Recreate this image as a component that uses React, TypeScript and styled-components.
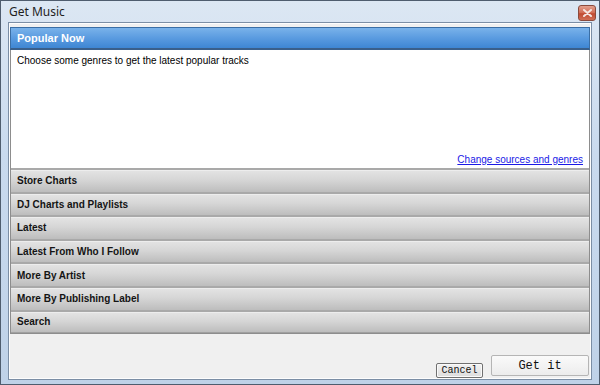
import React from 'react';
import styled, { createGlobalStyle } from 'styled-components';

const sections = [
  'Store Charts',
  'DJ Charts and Playlists',
  'Latest',
  'Latest From Who I Follow',
  'More By Artist',
  'More By Publishing Label',
  'Search',
];

const App = () => (
  <>
    <GlobalStyle />
    <Window>
      <TitleBar>
        <Title>Get Music</Title>
        <CloseButton>
          <svg width="9" height="8" viewBox="0 0 9 8">
            <path d="M1 1 L8 7 M8 1 L1 7" stroke="#f6e6e2" strokeWidth="2" strokeLinecap="round" />
          </svg>
        </CloseButton>
      </TitleBar>
      <Client>
        <Panel>
          <ActiveHeader>Popular Now</ActiveHeader>
          <Body>
            <Intro>Choose some genres to get the latest popular tracks</Intro>
            <LinkRow>
              <Link href="#">Change sources and genres</Link>
            </LinkRow>
          </Body>
          {sections.map((s) => (
            <SectionBar key={s}>{s}</SectionBar>
          ))}
        </Panel>
        <Footer>
          <SmallButton>Cancel</SmallButton>
          <BigButton>Get it</BigButton>
        </Footer>
      </Client>
    </Window>
  </>
);

export default App;

const GlobalStyle = createGlobalStyle`
  body {
    margin: 0;
    background: #ffffff;
  }
`;

const Window = styled.div`
  width: 600px;
  height: 385px;
  box-sizing: border-box;
  display: flex;
  flex-direction: column;
  background: linear-gradient(to bottom, #dce7f3 0%, #c9daee 40%, #bfd2e8 100%);
  border: 1px solid #4f5d6e;
  padding: 0 7px 4px 7px;
  font-family: "Liberation Sans", Arial, sans-serif;
`;

const TitleBar = styled.div`
  height: 21px;
  display: flex;
  align-items: center;
  justify-content: space-between;
`;

const Title = styled.span`
  font-family: "Noto Sans", "Liberation Sans", sans-serif;
  font-size: 12px;
  color: #1e1e1e;
  padding-left: 1px;
`;

const CloseButton = styled.div`
  width: 16px;
  height: 14px;
  margin-top: 3px;
  margin-right: -4px;
  border: 1px solid #8a4a3c;
  border-radius: 3px;
  background: linear-gradient(to bottom, #e3a08e 0%, #d06a52 50%, #c04a31 55%, #d06f56 100%);
  display: flex;
  align-items: center;
  justify-content: center;
`;

const Client = styled.div`
  flex: 1;
  display: flex;
  flex-direction: column;
  background: #f0f0f0;
  border: 1px solid #7b8ea5;
  box-shadow: inset 0 0 0 1px #fdfdfd;
  padding: 4px 1px 0 1px;
`;

const Panel = styled.div`
  display: flex;
  flex-direction: column;
  border: 1px solid #8d8d8d;
  border-top: none;
`;

const ActiveHeader = styled.div`
  height: 23px;
  box-sizing: border-box;
  padding-left: 6px;
  display: flex;
  align-items: center;
  color: #ffffff;
  font-weight: bold;
  font-size: 11px;
  background: linear-gradient(to bottom, #79b2ea 0%, #5a9be0 50%, #3e86d3 100%);
  border: 1px solid #3a6ea5;
  border-bottom: 2px solid #3a5f8a;
  margin: 0 -1px;
`;

const Body = styled.div`
  height: 118px;
  background: #ffffff;
  display: flex;
  flex-direction: column;
  justify-content: space-between;
  padding: 5px 6px 3px 6px;
  box-sizing: border-box;
`;

const Intro = styled.div`
  font-size: 10px;
  color: #000;
`;

const LinkRow = styled.div`
  display: flex;
  justify-content: flex-end;
`;

const Link = styled.a`
  font-size: 10px;
  color: #1a1ae6;
  text-decoration: underline;
`;

const SectionBar = styled.div`
  height: 23.6px;
  box-sizing: border-box;
  padding-left: 6px;
  display: flex;
  align-items: center;
  font-weight: bold;
  font-size: 10px;
  color: #141414;
  background: linear-gradient(to bottom, #e4e4e4 0%, #d6d6d6 45%, #bdbdbd 100%);
  border-top: 2px solid #a9a9a9;
  box-shadow: inset 0 1px 0 #ededed;
  &:last-child {
    border-bottom: 1px solid #a0a0a0;
  }
`;

const Footer = styled.div`
  flex: 1;
  display: flex;
  align-items: flex-end;
  justify-content: flex-end;
  gap: 8px;
  padding: 0 1px 1px 0;
`;

const SmallButton = styled.button`
  width: 47px;
  height: 15px;
  padding: 0;
  font-family: "Liberation Mono", "Courier New", monospace;
  font-size: 10px;
  color: #111;
  border: 1px solid #707070;
  border-radius: 2px;
  background: linear-gradient(to bottom, #f2f2f2, #dcdcdc);
  box-shadow: inset 0 0 0 1px #fafafa;
`;

const BigButton = styled.button`
  width: 98px;
  height: 21px;
  padding: 0;
  margin-bottom: 2px;
  font-family: "Liberation Mono", "Courier New", monospace;
  font-size: 12px;
  color: #111;
  border: 1px solid #b5b5b5;
  border-radius: 2px;
  background: linear-gradient(to bottom, #fafafa, #ececec);
`;
